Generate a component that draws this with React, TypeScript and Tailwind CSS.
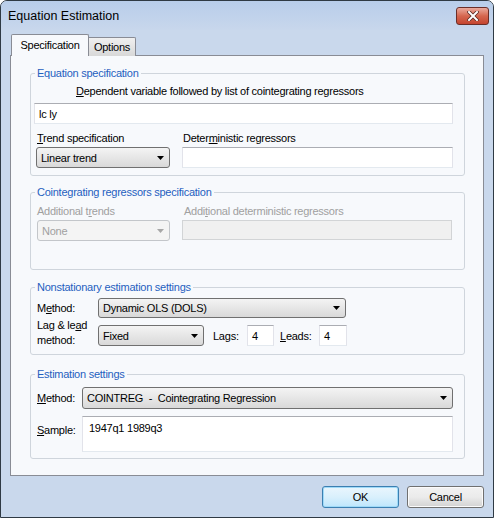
import React from 'react';

const Arrow = ({ disabled = false }: { disabled?: boolean }) => (
    <svg width="7" height="4" viewBox="0 0 7 4" className="shrink-0">
        <path d="M0 0 H7 L3.5 4 Z" fill={disabled ? '#a7a7a7' : '#000'} />
    </svg>
);

const Combo = ({
    value,
    disabled = false,
    className = '',
}: {
    value: string;
    disabled?: boolean;
    className?: string;
}) => (
    <div
        className={`flex items-center justify-between rounded-[3px] border pl-[4px] pr-[5px] ${
            disabled
                ? 'border-[#c3c6ca] bg-[#f4f4f4] text-[#a0a0a0]'
                : 'border-[#707070] bg-gradient-to-b from-[#f4f4f4] to-[#d9d9d9] text-black'
        } ${className}`}
    >
        <span className="whitespace-pre">{value}</span>
        <Arrow disabled={disabled} />
    </div>
);

const TextBox = ({ value = '', disabled = false, className = '' }: { value?: string; disabled?: boolean; className?: string }) => (
    <div
        className={`flex items-center border pl-[4px] ${
            disabled
                ? 'border-[#d2d4d6] bg-[#f0f0f0]'
                : 'border-t-[#abadb3] border-x-[#e2e3ea] border-b-[#e3e9ef] bg-white'
        } ${className}`}
    >
        {value}
    </div>
);

const Group = ({
    title,
    className = '',
    children,
}: {
    title: string;
    className?: string;
    children: React.ReactNode;
}) => (
    <fieldset className={`rounded-[3px] border border-[#cfd5dc] ${className}`}>
        <legend className="ml-[4px] px-[2px] leading-[14px] text-[#1f5fbf]">{title}</legend>
        {children}
    </fieldset>
);

export default function App() {
    return (
        <div className="flex h-[518px] w-[494px] flex-col overflow-hidden rounded-t-[7px] border border-[#2f3a44] bg-[#c9d8ec] font-['Liberation_Sans',Arial,sans-serif] text-[11px] leading-[14px] tracking-[-0.25px] text-black">
            {/* title bar */}
            <div className="flex h-[29px] items-center justify-between bg-gradient-to-b from-[#b8cdea] to-[#c8d7ec] pl-[7px] pr-[4px]">
                <span className="text-[12.5px] tracking-normal text-black">Equation Estimation</span>
                <div className="flex h-[18px] w-[33px] items-center justify-center rounded-[3px] border border-[#6b2e28] bg-gradient-to-b from-[#e9a99c] via-[#d5664f] to-[#c4442f]">
                    <svg width="12" height="10" viewBox="0 0 12 10">
                        <path
                            d="M2 1 L10 9 M10 1 L2 9"
                            stroke="#5a2a24"
                            strokeWidth="3.6"
                            strokeLinecap="square"
                        />
                        <path
                            d="M2 1 L10 9 M10 1 L2 9"
                            stroke="#fff"
                            strokeWidth="2"
                            strokeLinecap="square"
                        />
                    </svg>
                </div>
            </div>

            <div className="flex flex-1 flex-col px-[9px] pt-[4px]">
                {/* tabs */}
                <div className="relative z-10 flex h-[22px] items-end">
                    <div className="ml-[1px] flex h-[22px] w-[78px] items-center justify-center rounded-t-[2px] border border-b-0 border-[#898c95] bg-[#f7f9fc] pb-[1px]">
                        Specification
                    </div>
                    <div className="flex h-[19px] w-[47px] items-center justify-center rounded-tr-[2px] border border-b-0 border-l-0 border-[#898c95] bg-gradient-to-b from-[#f0f0f0] to-[#d8d8d8]">
                        Options
                    </div>
                </div>

                {/* tab page */}
                <div className="-mt-px flex h-[421px] flex-col border border-[#898c95] bg-[#f7f9fc] pl-[19px] pr-[18px] pt-[10px]">
                    <Group title="Equation specification">
                        <div className="flex flex-col pb-[7px] pl-[3px] pr-[11px]">
                            <div className="ml-[42px] mt-[4px] h-[14px]">
                                <u>D</u>ependent variable followed by list of cointegrating regressors
                            </div>
                            <TextBox value="lc ly" className="mt-[5px] h-[21px]" />
                            <div className="mt-[7px] flex h-[14px]">
                                <span className="ml-[3px] w-[146px]">
                                    <u>T</u>rend specification
                                </span>
                                <span>
                                    Deter<u>m</u>inistic regressors
                                </span>
                            </div>
                            <div className="mt-[2px] flex h-[21px] items-stretch">
                                <Combo value="Linear trend" className="ml-[2px] w-[134px]" />
                                <TextBox className="ml-[12px] flex-1" />
                            </div>
                        </div>
                    </Group>

                    <Group title="Cointegrating regressors specification" className="mt-[9px]">
                        <div className="flex flex-col pb-[28px] pl-[3px] pr-[12px] text-[#a0a0a0]">
                            <div className="mt-[5px] flex h-[14px]">
                                <span className="ml-[3px] w-[147px]">
                                    Additional t<u>r</u>ends
                                </span>
                                <span>
                                    Addi<u>t</u>ional deterministic regressors
                                </span>
                            </div>
                            <div className="mt-[2px] flex h-[21px] items-stretch">
                                <Combo value="None" disabled className="ml-[3px] w-[133px]" />
                                <TextBox disabled className="ml-[12px] mb-[1px] flex-1" />
                            </div>
                        </div>
                    </Group>

                    <Group title="Nonstationary estimation settings" className="mt-[10px]">
                        <div className="flex flex-col pb-[6px] pl-[6px]">
                            <div className="mt-[4px] flex h-[20px] items-center">
                                <span className="w-[61px]">
                                    M<u>e</u>thod:
                                </span>
                                <Combo value="Dynamic OLS (DOLS)" className="h-[20px] w-[248px]" />
                            </div>
                            <div className="flex items-start">
                                <span className="w-[61px] leading-[15px]">
                                    Lag &amp; le<u>a</u>d
                                    <br />
                                    method:
                                </span>
                                <div className="mt-[7px] flex h-[21px] items-stretch">
                                    <Combo value="Fixed" className="w-[106px]" />
                                    <span className="ml-[9px] flex w-[34px] items-center">
                                        La<u>g</u>s:
                                    </span>
                                    <TextBox value="4" className="w-[27px]" />
                                    <span className="ml-[6px] flex w-[39px] items-center">
                                        <u>L</u>eads:
                                    </span>
                                    <TextBox value="4" className="w-[28px]" />
                                </div>
                            </div>
                        </div>
                    </Group>

                    <Group title="Estimation settings" className="mt-[12px]">
                        <div className="flex flex-col pb-[6px] pl-[6px] pr-[11px]">
                            <div className="mt-[6px] flex h-[22px] items-center">
                                <span className="w-[45px]">
                                    <u>M</u>ethod:
                                </span>
                                <Combo
                                    value="COINTREG  -  Cointegrating Regression"
                                    className="h-[22px] flex-1"
                                />
                            </div>
                            <div className="mt-[7px] flex h-[36px] items-start">
                                <span className="mt-[7px] w-[45px]">
                                    <u>S</u>ample:
                                </span>
                                <div className="h-[36px] flex-1 border border-t-[#abadb3] border-x-[#e2e3ea] border-b-[#e3e9ef] bg-white pl-[6px] pt-[4px]">
                                    1947q1 1989q3
                                </div>
                            </div>
                        </div>
                    </Group>
                </div>

                {/* buttons */}
                <div className="mt-[10px] flex justify-end gap-[8px]">
                    <button className="h-[22px] w-[77px] rounded-[3px] border border-[#3c7fb1] bg-gradient-to-b from-[#eaf6fd] via-[#d9f0fc] to-[#bee6fd] shadow-[inset_0_0_0_1px_#9fdaf8]">
                        OK
                    </button>
                    <button className="h-[22px] w-[77px] rounded-[3px] border border-[#707070] bg-gradient-to-b from-[#f2f2f2] via-[#ebebeb] to-[#d3d3d3] shadow-[inset_0_0_0_1px_#fbfbfb]">
                        Cancel
                    </button>
                </div>
            </div>
        </div>
    );
}
